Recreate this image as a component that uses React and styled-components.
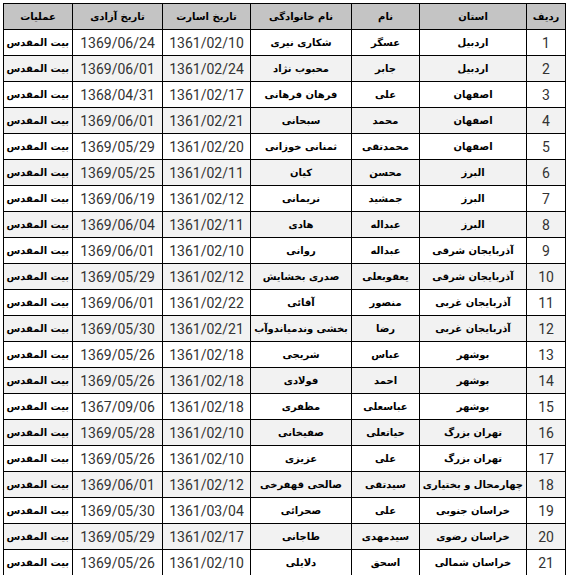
import styled, { createGlobalStyle } from 'styled-components'

const rows = [
  ['اردبیل', 'عسگر', 'شکاری نیری', '1361/02/10', '1369/06/24'],
  ['اردبیل', 'جابر', 'محبوب نژاد', '1361/02/24', '1369/06/01'],
  ['اصفهان', 'علی', 'فرهان فرهانی', '1361/02/17', '1368/04/31'],
  ['اصفهان', 'محمد', 'سبحانی', '1361/02/21', '1369/06/01'],
  ['اصفهان', 'محمدتقی', 'ثمنانی خوزانی', '1361/02/20', '1369/05/29'],
  ['البرز', 'محسن', 'کیان', '1361/02/11', '1369/05/25'],
  ['البرز', 'جمشید', 'نریمانی', '1361/02/12', '1369/06/19'],
  ['البرز', 'عبداله', 'هادی', '1361/02/11', '1369/06/04'],
  ['آذربایجان شرقی', 'عبداله', 'روانی', '1361/02/10', '1369/06/01'],
  ['آذربایجان شرقی', 'یعقوبعلی', 'صدری بخشایش', '1361/02/12', '1369/05/29'],
  ['آذربایجان غربی', 'منصور', 'آقائی', '1361/02/22', '1369/06/01'],
  ['آذربایجان غربی', 'رضا', 'بخشی وندمیاندوآب', '1361/02/21', '1369/05/30'],
  ['بوشهر', 'عباس', 'شریجی', '1361/02/18', '1369/05/26'],
  ['بوشهر', 'احمد', 'فولادی', '1361/02/18', '1369/05/26'],
  ['بوشهر', 'عباسعلی', 'مظفری', '1361/02/18', '1367/09/06'],
  ['تهران بزرگ', 'حیاتعلی', 'صفیخانی', '1361/02/10', '1369/05/28'],
  ['تهران بزرگ', 'علی', 'عزیزی', '1361/02/10', '1369/05/26'],
  ['چهارمحال و بختیاری', 'سیدتقی', 'صالحی قهفرخی', '1361/02/12', '1369/06/01'],
  ['خراسان جنوبی', 'علی', 'صحرائی', '1361/03/04', '1369/05/30'],
  ['خراسان رضوی', 'سیدمهدی', 'طاجانی', '1361/02/17', '1369/05/29'],
  ['خراسان شمالی', 'اسحق', 'دلایلی', '1361/02/10', '1369/05/26'],
]

const columns = [
  { title: 'ردیف', width: 39 },
  { title: 'استان', width: 107 },
  { title: 'نام', width: 68 },
  { title: 'نام خانوادگی', width: 101 },
  { title: 'تاریخ اسارت', width: 88 },
  { title: 'تاریخ آزادی', width: 90 },
  { title: 'عملیات', width: 69 },
]

const App = () => {
  return (
    <>
      <GlobalStyle />
      <Page>
        <Table>
          <colgroup>
            {columns.map((c) => (
              <Col key={c.title} $width={c.width} />
            ))}
          </colgroup>
          <thead>
            <tr>
              {columns.map((c) => (
                <HeadCell key={c.title}>{c.title}</HeadCell>
              ))}
            </tr>
          </thead>
          <tbody>
            {rows.map((r, i) => (
              <Row key={i} $striped={i % 2 === 1}>
                <NumCell>{i + 1}</NumCell>
                <TextCell>{r[0]}</TextCell>
                <TextCell>{r[1]}</TextCell>
                <TextCell>{r[2]}</TextCell>
                <NumCell>{r[3]}</NumCell>
                <NumCell>{r[4]}</NumCell>
                <TextCell $align="right">بیت المقدس</TextCell>
              </Row>
            ))}
          </tbody>
        </Table>
      </Page>
    </>
  )
}

export default App

const GlobalStyle = createGlobalStyle`
  body {
    margin: 0;
    background: #ffffff;
    font-family: "DejaVu Sans", sans-serif;
  }
`

const Page = styled.div`
  padding: 3px 3px 0 3px;
`

const Table = styled.table`
  direction: rtl;
  width: 563px;
  table-layout: fixed;
  border-collapse: collapse;
  border: 1px solid #000;
`

const Col = styled.col`
  width: ${(p) => p.$width}px;
`

const HeadCell = styled.th`
  height: 25px;
  padding: 0 4px;
  background: #c4c4c4;
  border: 1px solid #000;
  color: #000;
  font-family: "DejaVu Sans", sans-serif;
  font-size: 10px;
  font-weight: 700;
  line-height: 14px;
  text-align: center;
  white-space: nowrap;
`

const Row = styled.tr`
  background: ${(p) => (p.$striped ? '#f2f2f2' : '#ffffff')};
`

const NumCell = styled.td`
  height: 25px;
  padding: 0 2px;
  border: 1px solid #000;
  color: #333;
  font-family: Roboto, "Liberation Sans", sans-serif;
  font-size: 14px;
  line-height: 16px;
  text-align: center;
  vertical-align: middle;
  white-space: nowrap;
`

const TextCell = styled.td`
  height: 25px;
  padding: 0 3px;
  border: 1px solid #000;
  color: #000;
  font-family: "DejaVu Sans", sans-serif;
  font-size: 10px;
  font-weight: 700;
  line-height: 14px;
  text-align: ${(p) => p.$align || 'center'};
  vertical-align: middle;
  white-space: nowrap;
  overflow: hidden;
`
